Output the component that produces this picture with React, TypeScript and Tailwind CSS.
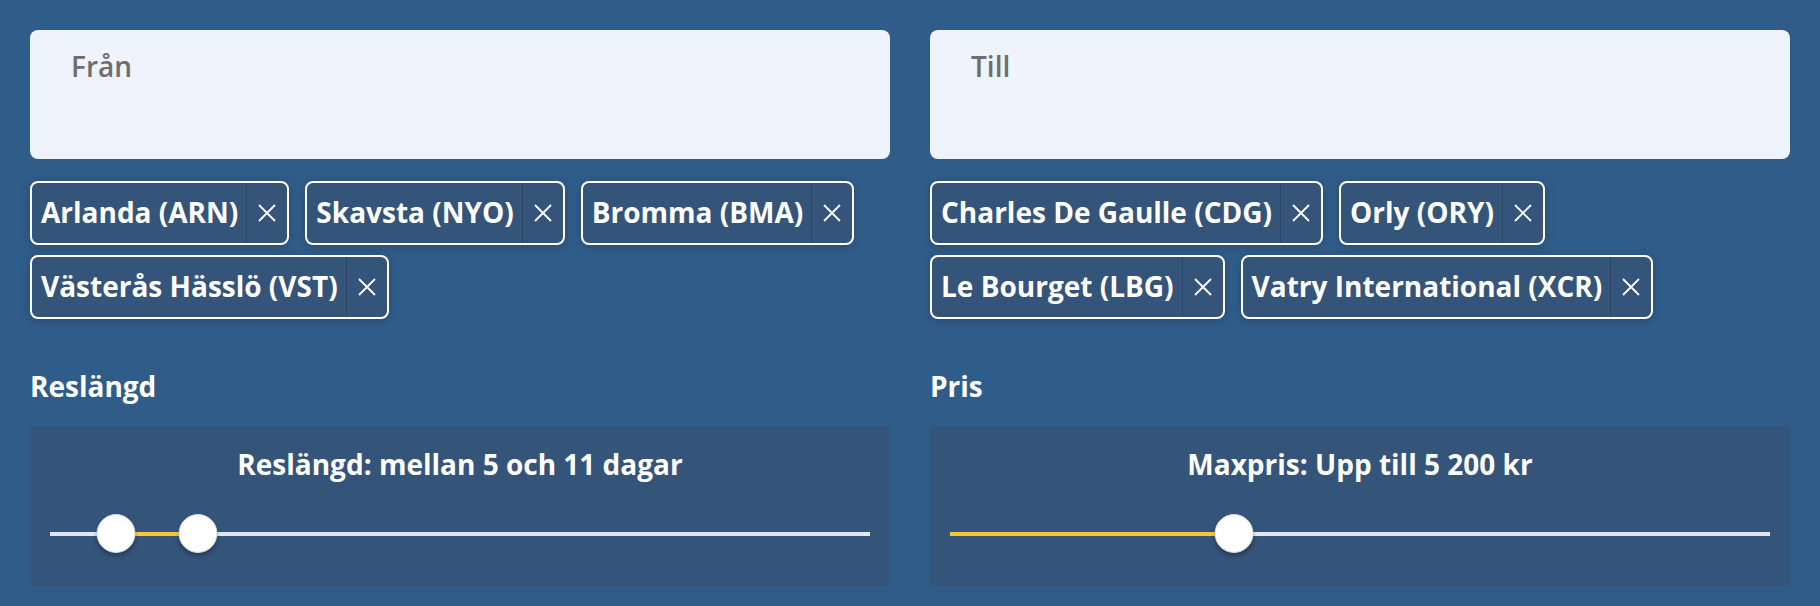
const FONT = "font-['Open_Sans',sans-serif]";

type SliderProps = {
  title: string;
  values: number[]; // percent positions of handles
  range?: boolean;
};

const Chip = ({ label }: { label: string }) => (
  <div className="flex h-[64px] items-stretch rounded-lg border-2 border-white bg-[#34547a] shadow-[0_2px_10px_rgba(0,0,0,0.18)]">
    <span className="flex items-center pb-[2px] pl-[9px] pr-[8px] text-[28px] font-bold leading-[38px] text-white">
      {label}
    </span>
    <span className="w-px bg-[#2b4567]" />
    <button className="flex w-[40px] items-center justify-center text-white">
      <svg width="18" height="18" viewBox="0 0 18 18" fill="none">
        <path d="M1 1L17 17M17 1L1 17" stroke="currentColor" strokeWidth="1.8" />
      </svg>
    </button>
  </div>
);

const Slider = ({ title, values, range }: SliderProps) => {
  const start = range ? values[0] : 0;
  const end = range ? values[1] : values[0];
  return (
    <div className="bg-[#34547a] px-[20px] pb-[32px] pt-[19px]">
      <p className="text-center text-[28px] font-bold leading-[38px] text-white">{title}</p>
      <div className="relative mt-[31px] h-[40px]">
        <div className="absolute left-0 right-0 top-[18px] h-[4px] bg-[#e4e6ee]" />
        <div
          className="absolute top-[18px] h-[4px] bg-[#f7c733]"
          style={{ left: `${start}%`, width: `${end - start}%` }}
        />
        {values.map((v, i) => (
          <div
            key={i}
            className="absolute top-0 h-[39px] w-[39px] -translate-x-1/2 rounded-full border border-[#d5d8df] bg-white shadow-[0_3px_4px_rgba(0,0,0,0.3)]"
            style={{ left: `${v}%` }}
          />
        ))}
      </div>
    </div>
  );
};

const Column = ({
  placeholder,
  chips,
  label,
  slider,
}: {
  placeholder: string;
  chips: string[];
  label: string;
  slider: SliderProps;
}) => (
  <div className="flex flex-col">
    <div className="h-[129px] rounded-lg bg-[#eff3fb] px-[41px] pt-[17px]">
      <span className="text-[28px] font-semibold leading-[38px] text-[#6e6e6e]">{placeholder}</span>
    </div>
    <div className="mt-[22px] flex flex-wrap gap-x-[16px] gap-y-[10px]">
      {chips.map((c) => (
        <Chip key={c} label={c} />
      ))}
    </div>
    <h3 className="mt-[48px] text-[28px] font-bold leading-[38px] text-white">{label}</h3>
    <div className="mt-[21px]">
      <Slider {...slider} />
    </div>
  </div>
);

export default function App() {
  return (
    <div className={`${FONT} min-h-screen bg-[#305c89] px-[30px] pb-[20px] pt-[30px]`}>
      <div className="grid grid-cols-2 gap-x-[40px]">
        <Column
          placeholder="Från"
          chips={["Arlanda (ARN)", "Skavsta (NYO)", "Bromma (BMA)", "Västerås Hässlö (VST)"]}
          label="Reslängd"
          slider={{ title: "Reslängd: mellan 5 och 11 dagar", values: [8.1, 18], range: true }}
        />
        <Column
          placeholder="Till"
          chips={[
            "Charles De Gaulle (CDG)",
            "Orly (ORY)",
            "Le Bourget (LBG)",
            "Vatry International (XCR)",
          ]}
          label="Pris"
          slider={{ title: "Maxpris: Upp till 5 200 kr", values: [34.6] }}
        />
      </div>
    </div>
  );
}
